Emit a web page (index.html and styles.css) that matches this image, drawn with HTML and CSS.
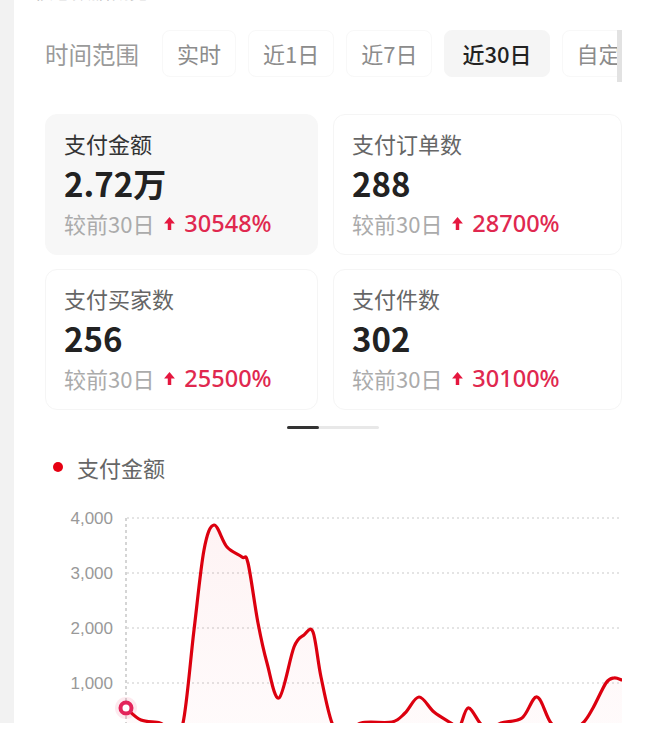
FILE: index.html
```html
<!DOCTYPE html>
<html lang="zh">
<head>
<meta charset="utf-8">
<link rel="stylesheet" href="styles.css">
</head>
<body>
<div class="page">
  <div class="panel">
    <div class="title">核心数据概览</div>
    <div class="tabs">
      <span class="tabs-label">时间范围</span>
      <span class="chip">实时</span>
      <span class="chip">近1日</span>
      <span class="chip">近7日</span>
      <span class="chip active">近30日</span>
      <span class="chip">自定义</span>
    </div>
    <div class="swiper">
      <div class="cards">
        <div class="card selected">
          <div class="card-title">支付金额</div>
          <div class="card-value">2.72万</div>
          <div class="card-cmp">较前30日 <svg class="arrow" viewBox="0 0 10 12"><path d="M5 0 L10 6 L6.6 6 L6.6 12 L3.4 12 L3.4 6 L0 6 Z"/></svg><span class="pct">30548%</span></div>
        </div>
        <div class="card">
          <div class="card-title">支付订单数</div>
          <div class="card-value">288</div>
          <div class="card-cmp">较前30日 <svg class="arrow" viewBox="0 0 10 12"><path d="M5 0 L10 6 L6.6 6 L6.6 12 L3.4 12 L3.4 6 L0 6 Z"/></svg><span class="pct">28700%</span></div>
        </div>
        <div class="card">
          <div class="card-title">支付买家数</div>
          <div class="card-value">256</div>
          <div class="card-cmp">较前30日 <svg class="arrow" viewBox="0 0 10 12"><path d="M5 0 L10 6 L6.6 6 L6.6 12 L3.4 12 L3.4 6 L0 6 Z"/></svg><span class="pct">25500%</span></div>
        </div>
        <div class="card">
          <div class="card-title">支付件数</div>
          <div class="card-value">302</div>
          <div class="card-cmp">较前30日 <svg class="arrow" viewBox="0 0 10 12"><path d="M5 0 L10 6 L6.6 6 L6.6 12 L3.4 12 L3.4 6 L0 6 Z"/></svg><span class="pct">30100%</span></div>
        </div>
      </div>
    </div>
    <div class="indicator"><span class="thumb"></span></div>
    <div class="legend"><span class="dot"></span>支付金额</div>
    <svg class="chart" width="577" height="240" viewBox="0 0 577 240">
      <defs>
        <linearGradient id="fillg" x1="0" y1="0" x2="0" y2="1">
          <stop offset="0" stop-color="#f03a4a" stop-opacity="0.06"/>
          <stop offset="1" stop-color="#f03a4a" stop-opacity="0.02"/>
        </linearGradient>
      </defs>
      <g class="grid">
        <line x1="82" y1="18" x2="577" y2="18"/>
        <line x1="82" y1="73" x2="577" y2="73"/>
        <line x1="82" y1="128" x2="577" y2="128"/>
        <line x1="82" y1="183" x2="577" y2="183"/>
      </g>
      <line class="vline" x1="81" y1="18" x2="81" y2="240"/>
      <g class="ylabels">
        <text x="68" y="24">4,000</text>
        <text x="68" y="79">3,000</text>
        <text x="68" y="134">2,000</text>
        <text x="68" y="189">1,000</text>
      </g>
      <path id="area" fill="url(#fillg)" d=""/>
      <path id="line" class="line" d=""/>
      <circle cx="81" cy="208" r="11" class="halo"/>
      <circle cx="81" cy="208" r="5.5" class="ring"/>
    </svg>
  </div>
</div>
<script src="script.js"></script>
</body>
</html>
```

FILE: styles.css
```css
* { box-sizing: border-box; }
html, body { margin: 0; padding: 0; background: #fff; }
body {
  font-family: "Noto Sans CJK SC", "Noto Sans", sans-serif;
  width: 654px;
  height: 743px;
  overflow: hidden;
}
.page {
  height: 723px;
  overflow: hidden;
  background: #f2f2f2;
  padding-left: 14px;
}
.panel {
  background: #fff;
  height: 100%;
  padding-left: 31px;
  display: flex;
  flex-direction: column;
}
.panel > * { flex-shrink: 0; }
.title {
  margin-top: -22px;
  margin-left: -11px;
  height: 26px;
  line-height: 26px;
  font-size: 19px;
  color: #b5b5b5;
}
.tabs {
  margin-top: 26px;
  width: 577px;
  padding-bottom: 5px;
  border-right: 5px solid #e2e2e2;
  display: flex;
  align-items: center;
  overflow: hidden;
  white-space: nowrap;
  gap: 12px;
}
.tabs-label {
  flex: none;
  font-size: 23.5px;
  color: #9a9a9a;
  margin-right: 11px;
}
.chip {
  flex: none;
  height: 47px;
  line-height: 45px;
  padding: 0 14px;
  border: 1px solid #f8f8f8;
  border-radius: 8px;
  font-size: 22px;
  color: #8c8c8c;
}
.chip.active {
  padding: 0 17px;
  background: #f5f5f5;
  border-color: #f5f5f5;
  color: #222;
  font-weight: 500;
}
.swiper {
  margin-top: 32px;
  width: 577px;
  overflow: hidden;
}
.cards {
  display: grid;
  grid-template-columns: 273px 289px;
  column-gap: 15px;
  row-gap: 14px;
}
.card {
  height: 141px;
  border: 1px solid #f5f5f5;
  border-radius: 12px;
  padding: 15px 0 0 18px;
}
.card.selected {
  background: #f7f7f7;
  border-color: #f7f7f7;
}
.card-title {
  font-size: 22px;
  line-height: 26px;
  color: #666;
}
.card.selected .card-title { color: #333; }
.card-value {
  margin-top: 7px;
  font-size: 33px;
  line-height: 40px;
  font-weight: 700;
  color: #222;
}
.card-cmp {
  margin-top: 6px;
  font-size: 22px;
  line-height: 28px;
  color: #ababab;
  display: flex;
  align-items: center;
  white-space: pre;
}
.arrow {
  width: 11px;
  height: 13px;
  fill: #e5173f;
  margin: 0 9px 0 5px;
}
.pct {
  font-family: "Noto Sans", sans-serif;
  font-size: 23.5px;
  font-weight: 500;
  color: #e0284f;
}
.indicator {
  margin: 16px 0 0 242px;
  width: 92px;
  height: 3px;
  background: #e8e8e8;
  border-radius: 2px;
}
.thumb {
  display: block;
  width: 32px;
  height: 3px;
  background: #333;
  border-radius: 2px;
}
.legend {
  margin-top: 25px;
  padding-left: 8px;
  font-size: 22px;
  line-height: 26px;
  color: #666;
  display: flex;
  align-items: center;
}
.dot {
  width: 10px;
  height: 10px;
  border-radius: 50%;
  background: #e60012;
  margin-right: 14px;
}
.chart {
  display: block;
  margin-top: 20px;
}
.grid line {
  stroke: #dcdcdc;
  stroke-width: 1.5;
  stroke-dasharray: 2 3;
}
.vline {
  stroke: #c8c8c8;
  stroke-width: 1.5;
  stroke-dasharray: 3 3;
}
.ylabels text {
  font-family: "Liberation Sans", sans-serif;
  font-size: 17px;
  fill: #999;
  text-anchor: end;
}
.line {
  fill: none;
  stroke: #dc000f;
  stroke-width: 3.2;
  stroke-linejoin: round;
  stroke-linecap: round;
}
.halo { fill: #e8285a; fill-opacity: 0.1; }
.ring { fill: #fff; stroke: #e3245a; stroke-width: 4; }
```

FILE: script.js
```js
(function () {
  var pts = [
    [81,208],[96,220],[115,223],[126,230],[138,223],[149,130],[159,50],[169,25],
    [182,47],[197,57],[203,63],[213,123],[222,163],[234,198],[249,147],[259,135],
    [268,132],[276,177],[287,223],[299,235],[316,223],[347,222],[360,213],[374,197],
    [389,212],[406,223],[414,228],[423,208],[435,223],[444,230],[456,223],[477,218],
    [492,197],[506,223],[522,233],[538,223],[548,208],[561,183],[569,178],[577,180]
  ];
  var d = "M" + pts[0][0] + "," + pts[0][1];
  for (var i = 0; i < pts.length - 1; i++) {
    var p0 = pts[i - 1] || pts[i];
    var p1 = pts[i];
    var p2 = pts[i + 1];
    var p3 = pts[i + 2] || p2;
    var c1x = p1[0] + (p2[0] - p0[0]) / 6;
    var c1y = p1[1] + (p2[1] - p0[1]) / 6;
    var c2x = p2[0] - (p3[0] - p1[0]) / 6;
    var c2y = p2[1] - (p3[1] - p1[1]) / 6;
    d += " C" + c1x.toFixed(1) + "," + c1y.toFixed(1) + " " + c2x.toFixed(1) + "," + c2y.toFixed(1) + " " + p2[0] + "," + p2[1];
  }
  document.getElementById("line").setAttribute("d", d);
  var last = pts[pts.length - 1];
  document.getElementById("area").setAttribute("d", d + " L" + last[0] + ",240 L" + pts[0][0] + ",240 Z");
})();
```
